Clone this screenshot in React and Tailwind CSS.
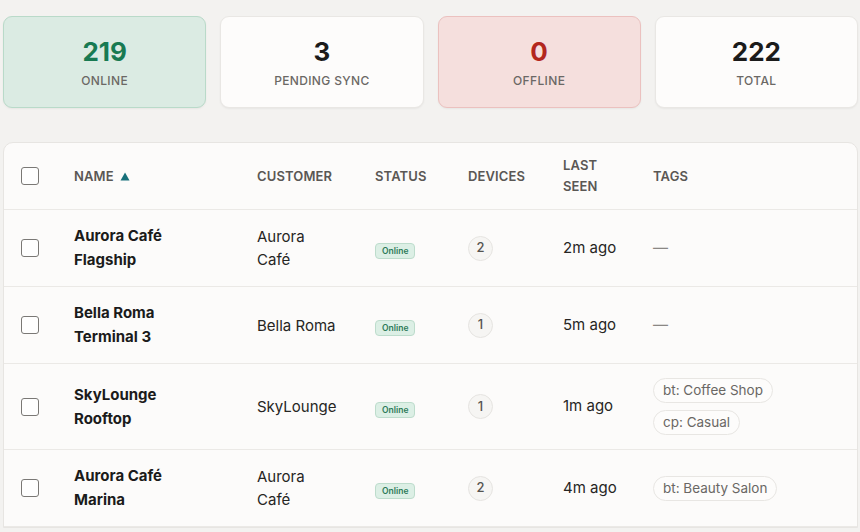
const stats = [
  { value: '219', label: 'Online', tone: 'green' },
  { value: '3', label: 'Pending Sync', tone: 'plain' },
  { value: '0', label: 'Offline', tone: 'red' },
  { value: '222', label: 'Total', tone: 'plain' },
]

const rows = [
  { name: 'Aurora Café Flagship', customer: 'Aurora Café', devices: 2, seen: '2m ago', tags: [] },
  { name: 'Bella Roma Terminal 3', customer: 'Bella Roma', devices: 1, seen: '5m ago', tags: [] },
  { name: 'SkyLounge Rooftop', customer: 'SkyLounge', devices: 1, seen: '1m ago', tags: ['bt: Coffee Shop', 'cp: Casual'] },
  { name: 'Aurora Café Marina', customer: 'Aurora Café', devices: 2, seen: '4m ago', tags: ['bt: Beauty Salon'] },
]

const cols = 'grid grid-cols-[54px_183px_118px_93px_95px_90px_1fr]'

function StatCard({ value, label, tone }) {
  const box =
    tone === 'green'
      ? 'bg-[#dbebe3] border-[#b9dac9]'
      : tone === 'red'
        ? 'bg-[#f5dfdd] border-[#ebc1bf]'
        : 'bg-[#fdfcfb] border-[#e9e7e4]'
  const num = tone === 'green' ? 'text-[#187a52]' : tone === 'red' ? 'text-[#b3271d]' : 'text-[#1b1b1b]'
  return (
    <div className={`h-[92px] rounded-[9px] border shadow-[0_1px_2px_rgba(0,0,0,0.05)] flex flex-col items-center justify-center ${box}`}>
      <div className={`text-[26px] leading-[32px] font-bold ${num}`}>{value}</div>
      <div className="mt-[5px] text-[12px] leading-[16px] font-medium uppercase tracking-[0.03em] text-[#6b6865]">{label}</div>
    </div>
  )
}

function Checkbox() {
  return <div className="w-[18px] h-[18px] rounded-[3px] border-[1.5px] border-[#7a7875] bg-[#fefefe]" />
}

export default function App() {
  return (
    <div className="min-h-screen bg-[#f3f2f0] pl-[3px] pr-[2px] pt-[16px] font-['Inter',sans-serif] text-[#1b1b1b]">
      <div className="grid grid-cols-4 gap-[14px]">
        {stats.map((s) => (
          <StatCard key={s.label} {...s} />
        ))}
      </div>

      <div className="mt-[34px] rounded-t-[10px] border border-[#e7e5e2] bg-[#fcfbfa] overflow-hidden">
        <div className={`${cols} items-center h-[67px] border-b border-[#ebe9e6] text-[13px] leading-[21px] font-semibold uppercase tracking-[0.01em] text-[#5a5754]`}>
          <div className="pl-[17px]"><Checkbox /></div>
          <div className="pl-[16px] flex items-center gap-[6px]">
            Name
            <svg width="10" height="9" viewBox="0 0 10 9"><path d="M5 0.5L9.5 8.5H0.5Z" fill="#17707a" /></svg>
          </div>
          <div className="pl-[16px]">Customer</div>
          <div className="pl-[16px]">Status</div>
          <div className="pl-[16px]">Devices</div>
          <div className="pl-[16px] w-[60px]">Last seen</div>
          <div className="pl-[16px]">Tags</div>
        </div>

        {rows.map((r) => (
          <div key={r.name} className={`${cols} items-center min-h-[76px] py-[14px] border-b border-[#ebe9e6]`}>
            <div className="pl-[17px]"><Checkbox /></div>
            <div className="pl-[16px] max-w-[150px] text-[15px] leading-[24px] font-bold">{r.name}</div>
            <div className="pl-[16px] text-[15px] leading-[23px] text-[#262523]">
              <div className="max-w-[82px]">{r.customer}</div>
            </div>
            <div className="pl-[16px]">
              <span className="inline-flex items-center h-[16px] px-[6px] rounded-[4px] border border-[#bddccc] bg-[#dcefe5] text-[8.5px] font-semibold text-[#2d7a58]">
                Online
              </span>
            </div>
            <div className="pl-[16px]">
              <span className="flex items-center justify-center w-[25px] h-[25px] rounded-full border border-[#e6e4e1] bg-[#f6f5f3] text-[13px] font-medium text-[#555350]">
                {r.devices}
              </span>
            </div>
            <div className="pl-[16px] text-[15px] whitespace-nowrap text-[#262523]">{r.seen}</div>
            <div className="pl-[16px] flex flex-col items-start gap-[7px]">
              {r.tags.length === 0 ? (
                <span className="text-[15px] text-[#8a8784]">—</span>
              ) : (
                r.tags.map((t) => (
                  <span key={t} className="h-[25px] px-[9px] flex items-center rounded-full border border-[#e8e6e3] bg-[#fdfcfb] text-[13.5px] text-[#6a6764]">
                    {t}
                  </span>
                ))
              )}
            </div>
          </div>
        ))}
      </div>
    </div>
  )
}
